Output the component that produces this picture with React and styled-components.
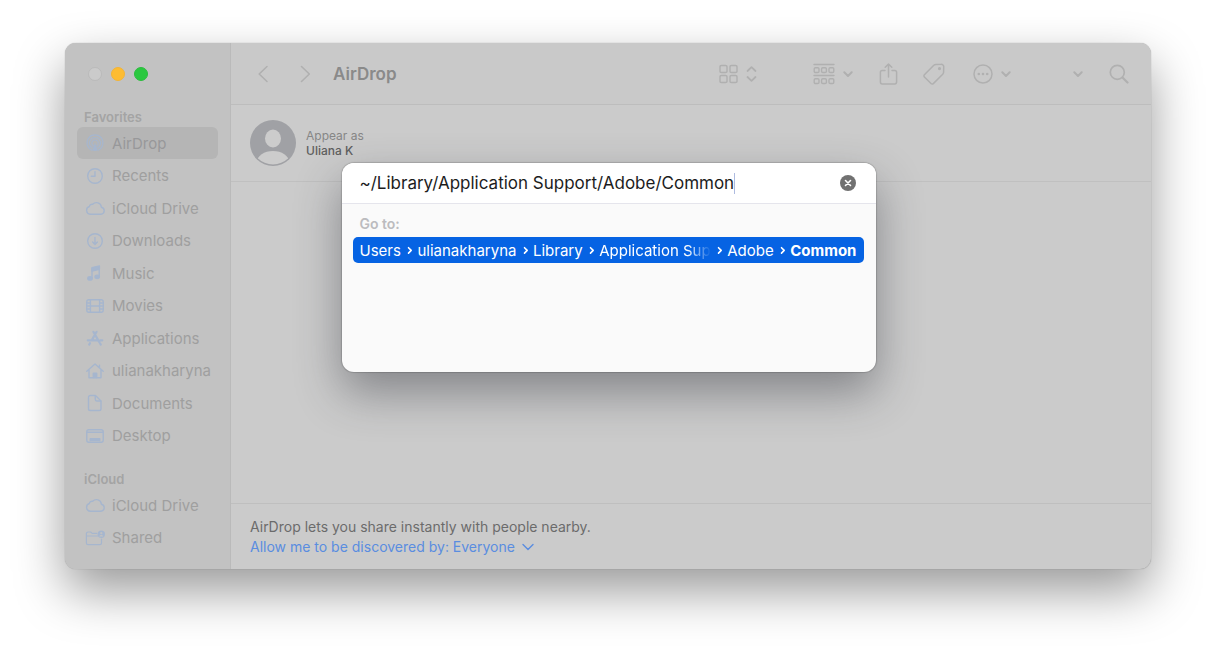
import { useState } from 'react';
import styled, { createGlobalStyle } from 'styled-components';

const GlobalStyle = createGlobalStyle`
  * {
    box-sizing: border-box;
  }

  body {
    margin: 0;
    background: #ffffff;
    font-family: Inter, "Liberation Sans", sans-serif;
  }

  button, input {
    font-family: inherit;
  }

  ul, ol {
    margin: 0;
    padding: 0;
    list-style: none;
  }
`;

const Page = styled.div`
  min-height: 100vh;
  display: flex;
  padding: 43px 65px 86px;
  overflow: hidden;
`;

const Window = styled.div`
  position: relative;
  flex: 1;
  display: flex;
  border-radius: 11px;
  overflow: hidden;
  background: #cbcbcb;
  box-shadow: 0 0 1px rgba(0, 0, 0, 0.4), 0 22px 50px rgba(0, 0, 0, 0.4);
`;

const Sidebar = styled.nav`
  width: 166px;
  flex-shrink: 0;
  display: flex;
  flex-direction: column;
  padding: 0 12px 15px;
  background: #c2c2c2;
  border-right: 1px solid #bababa;
`;

const Lights = styled.div`
  height: 65px;
  flex-shrink: 0;
  display: flex;
  gap: 9px;
  padding: 24px 11px 0;
`;

const Light = styled.button`
  width: 14px;
  height: 14px;
  padding: 0;
  border: 1px solid ${props => props.$border};
  border-radius: 50%;
  background: ${props => props.$color};
`;

const SectionTitle = styled.h2`
  margin: ${props => (props.$spaced ? '18px' : '0')} 0 0;
  padding-left: 7px;
  font-size: 13px;
  line-height: 19px;
  font-weight: 600;
  color: #a4a4a4;
`;

const NavList = styled.ul`
  flex: ${props => props.$rows} 1 auto;
  display: grid;
  grid-auto-rows: 1fr;
`;

const NavLink = styled.a`
  height: 32px;
  display: flex;
  align-items: center;
  gap: 7px;
  padding-left: 8px;
  border-radius: 6px;
  background: ${props => (props.$active ? '#b5b5b5' : 'transparent')};
  color: ${props => (props.$active ? '#98989a' : '#9f9f9f')};
  font-size: 15px;
  text-decoration: none;
  white-space: nowrap;

  svg {
    color: #a6b6ce;
    flex-shrink: 0;
  }
`;

const Main = styled.main`
  flex: 1;
  min-width: 0;
  display: flex;
  flex-direction: column;
`;

const Toolbar = styled.header`
  height: 62px;
  flex-shrink: 0;
  display: flex;
  align-items: center;
  padding: 0 22px 0 24px;
  background: #c9c9c9;
  border-bottom: 1px solid #bdbdbd;
`;

const Title = styled.h1`
  flex: 1;
  margin: 0 0 0 20px;
  font-size: 17px;
  font-weight: 600;
  color: #8a8a8a;
`;

const Tool = styled.button`
  display: flex;
  align-items: center;
  gap: 8px;
  margin: 0 0 0 ${props => props.$gap || 0}px;
  padding: 0;
  border: none;
  background: none;
  color: #b0b0b0;
  cursor: pointer;
`;

const Profile = styled.section`
  height: 77px;
  flex-shrink: 0;
  display: flex;
  align-items: center;
  gap: 10px;
  padding-left: 19px;
  border-bottom: 1px solid #c0c0c0;
`;

const ProfileText = styled.p`
  margin: 0;
  font-size: 12px;
  line-height: 15px;
  color: #868686;

  strong {
    display: block;
    font-weight: 500;
    color: #5f5f5f;
  }
`;

const Content = styled.div`
  flex: 1;
`;

const Footer = styled.footer`
  height: 66px;
  flex-shrink: 0;
  padding: 13px 19px 0;
  border-top: 1px solid #bfbfbf;
  font-size: 14px;
  line-height: 20px;
  color: #6b6b6b;

  p {
    margin: 0;
  }
`;

const Discover = styled.button`
  display: flex;
  align-items: center;
  gap: 7px;
  padding: 0;
  border: none;
  background: none;
  font-size: 14px;
  line-height: 20px;
  color: #5a8de0;
  cursor: pointer;
`;

const Overlay = styled.div`
  position: absolute;
  inset: 0;
  display: flex;
  justify-content: center;
  align-items: flex-start;
  padding: 120px 0 0 1px;
`;

const Dialog = styled.div`
  width: 534px;
  min-height: 209px;
  border-radius: 12px;
  overflow: hidden;
  background: #fafafa;
  box-shadow: 0 0 1px 1px rgba(0, 0, 0, 0.15), 0 20px 46px rgba(40, 44, 52, 0.44);
`;

const PathRow = styled.div`
  height: 41px;
  display: flex;
  align-items: center;
  padding: 0 20px 0 18px;
  background: #ffffff;
  border-bottom: 1px solid #e5e5ec;
`;

const PathInput = styled.input`
  field-sizing: content;
  padding: 0;
  border: none;
  outline: none;
  background: none;
  font-size: 17px;
  color: #1c1c1c;
`;

const Caret = styled.span`
  width: 1px;
  height: 21px;
  background: #aebbe0;
`;

const Clear = styled.button`
  display: flex;
  margin-left: auto;
  padding: 0;
  border: none;
  background: none;
  cursor: pointer;
`;

const Results = styled.div`
  padding: 11px 12px 0 11px;
`;

const ResultsLabel = styled.div`
  padding-left: 7px;
  font-size: 14px;
  line-height: 18px;
  font-weight: 600;
  color: #bcbcbf;
`;

const Result = styled.button`
  width: 100%;
  height: 26px;
  display: flex;
  align-items: center;
  justify-content: space-between;
  margin-top: 4px;
  padding: 0 7px;
  border: none;
  border-radius: 5px;
  background: #0663e3;
  color: #ffffff;
  font-size: 15px;
  white-space: nowrap;
`;

const Crumb = styled.span`
  font-weight: ${props => (props.$last ? 700 : 400)};

  ${props => props.$fade && `
    mask-image: linear-gradient(to left, transparent, #000 24px);
  `}
`;

const Svg = ({ w = 18, h = 18, sw = 1.4, children }) => (
  <svg
    width={w}
    height={h}
    viewBox={`0 0 ${w} ${h}`}
    fill="none"
    stroke="currentColor"
    strokeWidth={sw}
    strokeLinecap="round"
    strokeLinejoin="round"
    aria-hidden="true"
  >
    {children}
  </svg>
);

const icons = {
  airdrop: (
    <Svg w={20} sw={1.1}>
      <path d="M6.800 16.200a8 8 0 1 1 6.400 0M7.400 14a5.600 5.600 0 1 1 5.200 0M8.200 11.800a3.200 3.200 0 1 1 3.600 0" />
      <path d="M10 8.600 7.300 16.600a8 8 0 0 0 5.400 0z" fill="currentColor" stroke="none" />
    </Svg>
  ),
  recents: (
    <Svg w={20}>
      <circle cx="10" cy="9" r="7.3" />
      <path d="M10 4.6V9.3H6.2" />
    </Svg>
  ),
  cloud: (
    <Svg w={20}>
      <path d="M5.300 15.300a4 4 0 0 1-.9-7.800 2.700 2.700 0 0 1 3.300-2.200 5 5 0 0 1 8.700 2.900 3.600 3.600 0 0 1-.6 7.100z" />
    </Svg>
  ),
  downloads: (
    <Svg w={20}>
      <circle cx="10" cy="9" r="7.3" />
      <path d="M10 5.5v6.8M7.6 10l2.4 2.5 2.4-2.5" />
    </Svg>
  ),
  music: (
    <Svg w={20}>
      <path d="M7 14V4.2L14.2 2.6v9.8" />
      <path d="M7 3.7l7.4-1.8v3.4L7 7z" fill="currentColor" />
      <ellipse cx="5" cy="14.4" rx="2.2" ry="1.7" fill="currentColor" />
      <ellipse cx="12.2" cy="12.8" rx="2.2" ry="1.7" fill="currentColor" />
    </Svg>
  ),
  movies: (
    <Svg w={20}>
      <rect x="1.8" y="2.7" width="16.4" height="12.6" rx="2" />
      <path d="M5.4 3v12M14.6 3v12M5.4 9h9.2M2 6h3M2 9h3M2 12h3M15 6h3M15 9h3M15 12h3" />
    </Svg>
  ),
  apps: (
    <Svg w={20} sw={2.2}>
      <path d="M8.400 2.800l5.900 10.300M11.600 2.800L7.100 10.600M2.800 11.300h9M15.300 11.300h2M5 14.200l-.8 1.400M15.100 14.500l.7 1.100" />
    </Svg>
  ),
  home: (
    <Svg w={20}>
      <path d="M1.800 9.200L10 2l8.200 7.200M4 7.800v8h12v-8M14.500 5.700V3.200" />
      <path d="M8.300 15.500v-4.300h3.400v4.300z" fill="currentColor" />
    </Svg>
  ),
  documents: (
    <Svg w={20}>
      <path d="M10.500 1.500H5.300a1.800 1.800 0 0 0-1.800 1.800v11.400a1.800 1.800 0 0 0 1.800 1.800h8.900a1.800 1.800 0 0 0 1.800-1.800V7z" />
      <path d="M10.300 1.700v3.900a1.400 1.400 0 0 0 1.400 1.400h4" />
    </Svg>
  ),
  desktop: (
    <Svg w={20}>
      <rect x="1.8" y="2.7" width="16.4" height="12.6" rx="2" />
      <path d="M2 5.3h16" />
      <rect x="5.2" y="11.6" width="9.6" height="2" fill="currentColor" />
    </Svg>
  ),
  shared: (
    <Svg w={20} sw={1.2}>
      <path d="M16.500 10v4a1.600 1.600 0 0 1-1.600 1.600H3a1.600 1.600 0 0 1-1.600-1.600V4.600A1.600 1.600 0 0 1 3 3h2.600l1.600 1.400h4.600M1.500 7h11" />
      <circle cx="16.300" cy="5.200" r="3.700" fill="currentColor" stroke="none" />
      <circle cx="16.300" cy="4.200" r="1.100" fill="#c2c2c2" stroke="none" />
      <path d="M14.300 7.400a2.100 2.100 0 0 1 4 0z" fill="#c2c2c2" stroke="none" />
    </Svg>
  ),
};

const ChevronDown = () => (
  <Svg w={10} h={10} sw={2}>
    <path d="M1.300 3.300L5 7l3.700-3.700" />
  </Svg>
);

const CrumbArrow = () => (
  <Svg w={8} h={10} sw={1.6}>
    <path d="M3.500 2.700L6.200 5.400 3.500 8.100" />
  </Svg>
);

const favorites = [
  { icon: 'airdrop', label: 'AirDrop', active: true },
  { icon: 'recents', label: 'Recents' },
  { icon: 'cloud', label: 'iCloud Drive' },
  { icon: 'downloads', label: 'Downloads' },
  { icon: 'music', label: 'Music' },
  { icon: 'movies', label: 'Movies' },
  { icon: 'apps', label: 'Applications' },
  { icon: 'home', label: 'ulianakharyna' },
  { icon: 'documents', label: 'Documents' },
  { icon: 'desktop', label: 'Desktop' },
];

const icloud = [
  { icon: 'cloud', label: 'iCloud Drive' },
  { icon: 'shared', label: 'Shared' },
];

const crumbs = [
  { name: 'Users' },
  { name: 'ulianakharyna' },
  { name: 'Library' },
  { name: 'Application Sup', fade: true },
  { name: 'Adobe' },
  { name: 'Common' },
];

const NavSection = ({ items }) => (
  <NavList $rows={items.length}>
    {items.map(item => (
      <li key={item.label}>
        <NavLink href="#" $active={item.active}>
          {icons[item.icon]}
          {item.label}
        </NavLink>
      </li>
    ))}
  </NavList>
);

const FinderToolbar = () => (
  <Toolbar>
    <Tool aria-label="Back">
      <Svg w={18} h={20} sw={1.6}><path d="M12 2.5L4.200 10l7.800 7.500" /></Svg>
    </Tool>
    <Tool aria-label="Forward" $gap={22}>
      <Svg w={18} h={20} sw={1.6}><path d="M6.500 2.500l7.800 7.500-7.800 7.500" /></Svg>
    </Tool>
    <Title>AirDrop</Title>
    <Tool aria-label="View">
      <Svg w={19} h={20} sw={1.5}>
        <rect x="1" y="1.5" width="7" height="7" rx="1.3" />
        <rect x="11" y="1.5" width="7" height="7" rx="1.3" />
        <rect x="1" y="11.5" width="7" height="7" rx="1.3" />
        <rect x="11" y="11.5" width="7" height="7" rx="1.3" />
      </Svg>
      <Svg w={11} h={18} sw={1.8}><path d="M1.500 6l4-3.800 4 3.800M1.500 12l4 3.800 4-3.800" /></Svg>
    </Tool>
    <Tool aria-label="Group" $gap={56}>
      <Svg w={22} h={22} sw={1.4}>
        <path d="M1 1.500h20M1 12.500h20" />
        <rect x="1.200" y="4.700" width="4.800" height="4.800" rx="1.200" />
        <rect x="8.600" y="4.700" width="4.800" height="4.800" rx="1.200" />
        <rect x="16" y="4.700" width="4.800" height="4.800" rx="1.200" />
        <rect x="1.200" y="15.700" width="4.800" height="4.800" rx="1.200" />
        <rect x="8.600" y="15.700" width="4.800" height="4.800" rx="1.200" />
        <rect x="16" y="15.700" width="4.800" height="4.800" rx="1.200" />
      </Svg>
      <ChevronDown />
    </Tool>
    <Tool aria-label="Share" $gap={26}>
      <Svg w={19} h={22} sw={1.5}>
        <path d="M6 7.500H3.200A1.800 1.800 0 0 0 1.400 9.300v9.800a1.800 1.800 0 0 0 1.800 1.800h12.600a1.800 1.800 0 0 0 1.800-1.800V9.300a1.800 1.800 0 0 0-1.800-1.800H13M9.500 14V1.300M6.200 4.300l3.300-3.200 3.300 3.200" />
      </Svg>
    </Tool>
    <Tool aria-label="Tags" $gap={25}>
      <Svg w={22} h={22} sw={1.5}>
        <path d="M1.400 11.700l9.400-9.400a3 3 0 0 1 2-.9l5.400-.1a2.400 2.400 0 0 1 2.500 2.500l-.1 5.400a3 3 0 0 1-.9 2l-9.400 9.400a1.600 1.600 0 0 1-2.300 0l-6.600-6.600a1.600 1.600 0 0 1 0-2.300z" />
        <circle cx="16.5" cy="5.6" r="0.9" fill="currentColor" />
      </Svg>
    </Tool>
    <Tool aria-label="More" $gap={28}>
      <Svg w={20} h={20} sw={1.5}>
        <circle cx="10" cy="10" r="9" />
        <g fill="currentColor" stroke="none">
          <circle cx="5.8" cy="10" r="1.3" />
          <circle cx="10" cy="10" r="1.3" />
          <circle cx="14.2" cy="10" r="1.3" />
        </g>
      </Svg>
      <ChevronDown />
    </Tool>
    <Tool aria-label="More items" $gap={62}>
      <ChevronDown />
    </Tool>
    <Tool aria-label="Search" $gap={26}>
      <Svg w={20} h={20} sw={1.7}>
        <circle cx="8.3" cy="8.3" r="7" />
        <path d="M13.500 13.500l5 5" strokeWidth="2.2" />
      </Svg>
    </Tool>
  </Toolbar>
);

const GoToDialog = () => {
  const [path, setPath] = useState('~/Library/Application Support/Adobe/Common');

  return (
    <Dialog role="dialog" aria-label="Go to folder">
      <PathRow>
        <PathInput
          aria-label="Folder path"
          value={path}
          spellCheck={false}
          onChange={e => setPath(e.target.value)}
        />
        <Caret />
        <Clear aria-label="Clear" onClick={() => setPath('')}>
          <svg width="16" height="16" viewBox="0 0 16 16" aria-hidden="true">
            <circle cx="8" cy="8" r="8" fill="#717171" />
            <path d="M5.500 5.500l5 5M10.500 5.500l-5 5" stroke="#ffffff" strokeWidth="1.6" strokeLinecap="round" />
          </svg>
        </Clear>
      </PathRow>
      <Results>
        <ResultsLabel>Go to:</ResultsLabel>
        <Result>
          {crumbs.map((crumb, i) => [
            i > 0 && <CrumbArrow key={`${crumb.name}-arrow`} />,
            <Crumb key={crumb.name} $fade={crumb.fade} $last={i === crumbs.length - 1}>
              {crumb.name}
            </Crumb>,
          ])}
        </Result>
      </Results>
    </Dialog>
  );
};

const App = () => (
  <>
    <GlobalStyle />
    <Page>
      <Window>
        <Sidebar>
          <Lights>
            <Light aria-label="Close" $color="#cbcbcb" $border="#bababa" />
            <Light aria-label="Minimize" $color="#fdbc32" $border="#f3b436" />
            <Light aria-label="Zoom" $color="#2bc840" $border="#2bbd3e" />
          </Lights>
          <SectionTitle>Favorites</SectionTitle>
          <NavSection items={favorites} />
          <SectionTitle $spaced>iCloud</SectionTitle>
          <NavSection items={icloud} />
        </Sidebar>
        <Main>
          <FinderToolbar />
          <Profile>
            <svg width="46" height="46" viewBox="0 0 46 46" aria-hidden="true">
              <clipPath id="avatar"><circle cx="23" cy="23" r="21.5" /></clipPath>
              <circle cx="23" cy="23" r="23" fill="#a0a1a5" />
              <ellipse cx="23" cy="18.5" rx="8" ry="9" fill="#cccccc" />
              <ellipse cx="23" cy="42" rx="16" ry="11" fill="#cccccc" clipPath="url(#avatar)" />
            </svg>
            <ProfileText>
              Appear as
              <strong>Uliana K</strong>
            </ProfileText>
          </Profile>
          <Content />
          <Footer>
            <p>AirDrop lets you share instantly with people nearby.</p>
            <Discover>
              Allow me to be discovered by: Everyone
              <Svg w={12} h={10} sw={1.4}><path d="M1 2.500l5 5 5-5" /></Svg>
            </Discover>
          </Footer>
        </Main>
        <Overlay>
          <GoToDialog />
        </Overlay>
      </Window>
    </Page>
  </>
);

export default App;
